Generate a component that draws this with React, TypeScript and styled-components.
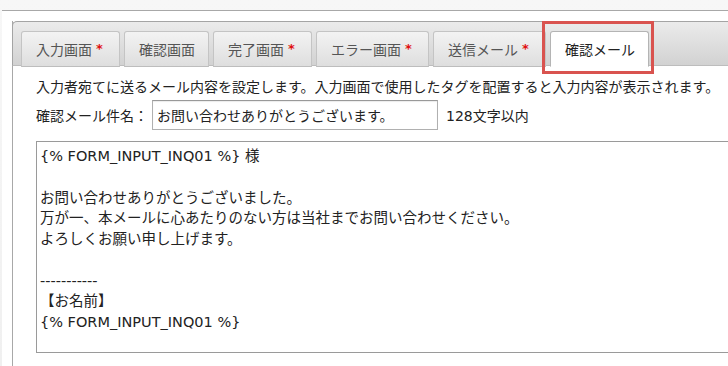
import React, { FC } from 'react'
import styled, { createGlobalStyle } from 'styled-components'

interface iTab {
  label: string
  required: boolean
  active?: boolean
}

const tabs: iTab[] = [
  { label: '入力画面', required: true },
  { label: '確認画面', required: false },
  { label: '完了画面', required: true },
  { label: 'エラー画面', required: true },
  { label: '送信メール', required: true },
  { label: '確認メール', required: false, active: true }
]

const mailBody = `{% FORM_INPUT_INQ01 %} 様

お問い合わせありがとうございました。
万が一、本メールに心あたりのない方は当社までお問い合わせください。
よろしくお願い申し上げます。

-----------
【お名前】
{% FORM_INPUT_INQ01 %}
`

const GlobalStyle = createGlobalStyle`
  html, body {
    margin: 0;
    padding: 0;
    background: #fff;
    overflow: hidden;
  }
  body {
    font-family: "DejaVu Sans", "Noto Sans CJK JP", sans-serif;
    font-size: 14px;
    color: #222;
  }
`

const Page = styled.div`
  width: 728px;
  height: 366px;
  padding-top: 10px;
  background: linear-gradient(#f7f7f7, #f0f0f0);
  box-sizing: border-box;
  overflow: hidden;
`
const Frame = styled.div`
  margin-left: 2px;
  height: 100%;
  border-top: 1px solid #a8a8a8;
  background: #fff;
  padding: 10px 0 0 10px;
  box-sizing: border-box;
`
const Panel = styled.div`
  position: relative;
  height: 100%;
  width: 740px;
  border-left: 1px solid #a8a8a8;
  box-sizing: border-box;
`
const TabBar = styled.div`
  display: flex;
  gap: 4px;
  height: 45px;
  box-sizing: border-box;
  margin-left: -1px;
  padding: 9px 0 0 8px;
  border-top: 1px solid #a4a4a4;
  border-left: 1px solid #a4a4a4;
  border-bottom: 1px solid #bdbdbd;
  border-top-left-radius: 5px;
  background: linear-gradient(#ebebeb, #d2d2d2);
`
const Tab = styled.div<{ $active?: boolean }>`
  flex: none;
  display: flex;
  align-items: center;
  height: 36px;
  margin-bottom: -1px;
  padding: 0 13px 0 14px;
  box-sizing: border-box;
  border: 1px solid ${(p) => (p.$active ? '#b4b4b4' : '#c4c4c4')};
  border-bottom-color: ${(p) => (p.$active ? '#fff' : '#bdbdbd')};
  border-radius: 3px 3px 0 0;
  background: ${(p) =>
    p.$active ? '#fff' : 'linear-gradient(#f3f3f3, #dedede)'};
  color: ${(p) => (p.$active ? '#222' : '#555')};
  font-family: "Noto Sans CJK JP", sans-serif;
  font-size: 14px;
  white-space: nowrap;
`
const Required = styled.span`
  flex: none;
  width: 13px;
  margin-left: 1px;
  text-align: center;
  color: #e01010;
  font-family: "DejaVu Sans", sans-serif;
  font-weight: bold;
  font-size: 13px;
  line-height: 14px;
`
const Highlight = styled.div`
  position: absolute;
  left: 529px;
  top: 0px;
  width: 112px;
  height: 53px;
  border: 3px solid #d9534f;
  box-sizing: border-box;
  pointer-events: none;
`
const Content = styled.div`
  display: flex;
  flex-direction: column;
  padding: 11px 0 0 23px;
`
const Intro = styled.p`
  margin: 0;
  line-height: 20px;
  white-space: nowrap;
`
const SubjectRow = styled.div`
  display: flex;
  align-items: center;
  gap: 4px;
  margin-top: 3px;
  white-space: nowrap;
`
const SubjectInput = styled.input`
  width: 286px;
  height: 30px;
  box-sizing: border-box;
  padding: 0 4px;
  border: 1px solid #b0b0b0;
  border-top-color: #999;
  box-shadow: inset 0 1px 1px rgba(0, 0, 0, 0.08);
  font-family: "Noto Sans CJK JP", sans-serif;
  font-size: 14px;
  color: #222;
  outline: none;
`
const Limit = styled.span`
  margin-left: 4px;
`
const Body = styled.textarea`
  margin-top: 11px;
  width: 720px;
  height: 212px;
  box-sizing: border-box;
  padding: 4px 3px;
  border: 1px solid #9a9a9a;
  font-family: "DejaVu Sans", "Noto Sans CJK JP", sans-serif;
  font-size: 14.5px;
  line-height: 20.75px;
  color: #222;
  resize: none;
  overflow: hidden;
  outline: none;
`

const App: FC = () => {
  return (
    <Page>
      <GlobalStyle />
      <Frame>
        <Panel>
          <TabBar>
            {tabs.map((t) => (
              <Tab key={t.label} $active={t.active}>
                {t.label}
                {t.required && <Required>*</Required>}
              </Tab>
            ))}
          </TabBar>
          <Highlight />
          <Content>
            <Intro>
              入力者宛てに送るメール内容を設定します。入力画面で使用したタグを配置すると入力内容が表示されます。
            </Intro>
            <SubjectRow>
              確認メール件名：
              <SubjectInput
                defaultValue="お問い合わせありがとうございます。"
                readOnly
              />
              <Limit>128文字以内</Limit>
            </SubjectRow>
            <Body defaultValue={mailBody} readOnly />
          </Content>
        </Panel>
      </Frame>
    </Page>
  )
}

export default App
